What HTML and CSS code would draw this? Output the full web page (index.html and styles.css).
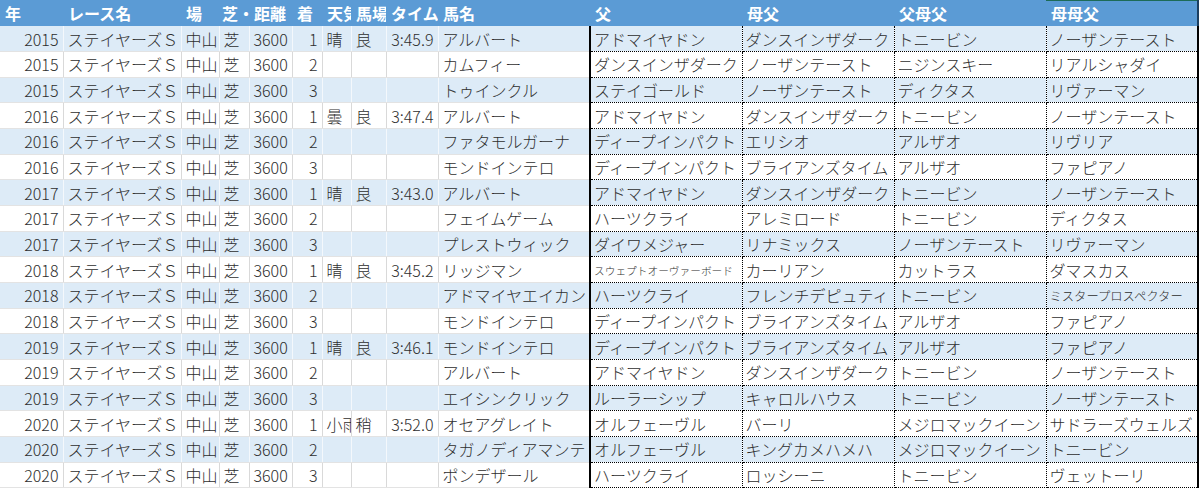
FILE: index.html
```html
<!DOCTYPE html>
<html lang="ja">
<head>
<meta charset="utf-8">
<title>ステイヤーズS</title>
<link rel="stylesheet" href="styles.css">
</head>
<body>
<table class="sheet">
  <colgroup>
    <col class="c-year"><col class="c-race"><col class="c-place"><col class="c-turf"><col class="c-dist"><col class="c-rank"><col class="c-weather"><col class="c-track"><col class="c-time"><col class="c-horse"><col class="c-ped"><col class="c-ped"><col class="c-ped"><col class="c-ped-last">
  </colgroup>
  <thead>
    <tr>
      <th>年</th><th>レース名</th><th>場</th><th class="span">芝・距離</th><th></th><th>着</th><th>天気</th><th>馬場</th><th>タイム</th><th>馬名</th><th>父</th><th>母父</th><th>父母父</th><th class="last">母母父</th>
    </tr>
  </thead>
  <tbody>
    <tr class="band"><td class="r">2015</td><td>ステイヤーズＳ</td><td>中山</td><td>芝</td><td class="r">3600</td><td class="r">1</td><td>晴</td><td>良</td><td class="r">3:45.9</td><td>アルバート</td><td class="p first">アドマイヤドン</td><td class="p">ダンスインザダーク</td><td class="p">トニービン</td><td class="p end">ノーザンテースト</td></tr>
    <tr><td class="r">2015</td><td>ステイヤーズＳ</td><td>中山</td><td>芝</td><td class="r">3600</td><td class="r">2</td><td></td><td></td><td></td><td>カムフィー</td><td class="p first">ダンスインザダーク</td><td class="p">ノーザンテースト</td><td class="p">ニジンスキー</td><td class="p end">リアルシャダイ</td></tr>
    <tr class="band"><td class="r">2015</td><td>ステイヤーズＳ</td><td>中山</td><td>芝</td><td class="r">3600</td><td class="r">3</td><td></td><td></td><td></td><td>トゥインクル</td><td class="p first">ステイゴールド</td><td class="p">ノーザンテースト</td><td class="p">ディクタス</td><td class="p end">リヴァーマン</td></tr>
    <tr><td class="r">2016</td><td>ステイヤーズＳ</td><td>中山</td><td>芝</td><td class="r">3600</td><td class="r">1</td><td>曇</td><td>良</td><td class="r">3:47.4</td><td>アルバート</td><td class="p first">アドマイヤドン</td><td class="p">ダンスインザダーク</td><td class="p">トニービン</td><td class="p end">ノーザンテースト</td></tr>
    <tr class="band"><td class="r">2016</td><td>ステイヤーズＳ</td><td>中山</td><td>芝</td><td class="r">3600</td><td class="r">2</td><td></td><td></td><td></td><td>ファタモルガーナ</td><td class="p first">ディープインパクト</td><td class="p">エリシオ</td><td class="p">アルザオ</td><td class="p end">リヴリア</td></tr>
    <tr><td class="r">2016</td><td>ステイヤーズＳ</td><td>中山</td><td>芝</td><td class="r">3600</td><td class="r">3</td><td></td><td></td><td></td><td>モンドインテロ</td><td class="p first">ディープインパクト</td><td class="p">ブライアンズタイム</td><td class="p">アルザオ</td><td class="p end">ファピアノ</td></tr>
    <tr class="band"><td class="r">2017</td><td>ステイヤーズＳ</td><td>中山</td><td>芝</td><td class="r">3600</td><td class="r">1</td><td>晴</td><td>良</td><td class="r">3:43.0</td><td>アルバート</td><td class="p first">アドマイヤドン</td><td class="p">ダンスインザダーク</td><td class="p">トニービン</td><td class="p end">ノーザンテースト</td></tr>
    <tr><td class="r">2017</td><td>ステイヤーズＳ</td><td>中山</td><td>芝</td><td class="r">3600</td><td class="r">2</td><td></td><td></td><td></td><td>フェイムゲーム</td><td class="p first">ハーツクライ</td><td class="p">アレミロード</td><td class="p">トニービン</td><td class="p end">ディクタス</td></tr>
    <tr class="band"><td class="r">2017</td><td>ステイヤーズＳ</td><td>中山</td><td>芝</td><td class="r">3600</td><td class="r">3</td><td></td><td></td><td></td><td>プレストウィック</td><td class="p first">ダイワメジャー</td><td class="p">リナミックス</td><td class="p">ノーザンテースト</td><td class="p end">リヴァーマン</td></tr>
    <tr><td class="r">2018</td><td>ステイヤーズＳ</td><td>中山</td><td>芝</td><td class="r">3600</td><td class="r">1</td><td>晴</td><td>良</td><td class="r">3:45.2</td><td>リッジマン</td><td class="p first"><span class="shrink-xs">スウェプトオーヴァーボード</span></td><td class="p">カーリアン</td><td class="p">カットラス</td><td class="p end">ダマスカス</td></tr>
    <tr class="band"><td class="r">2018</td><td>ステイヤーズＳ</td><td>中山</td><td>芝</td><td class="r">3600</td><td class="r">2</td><td></td><td></td><td></td><td>アドマイヤエイカン</td><td class="p first">ハーツクライ</td><td class="p">フレンチデピュティ</td><td class="p">トニービン</td><td class="p end"><span class="shrink-s">ミスタープロスペクター</span></td></tr>
    <tr><td class="r">2018</td><td>ステイヤーズＳ</td><td>中山</td><td>芝</td><td class="r">3600</td><td class="r">3</td><td></td><td></td><td></td><td>モンドインテロ</td><td class="p first">ディープインパクト</td><td class="p">ブライアンズタイム</td><td class="p">アルザオ</td><td class="p end">ファピアノ</td></tr>
    <tr class="band"><td class="r">2019</td><td>ステイヤーズＳ</td><td>中山</td><td>芝</td><td class="r">3600</td><td class="r">1</td><td>晴</td><td>良</td><td class="r">3:46.1</td><td>モンドインテロ</td><td class="p first">ディープインパクト</td><td class="p">ブライアンズタイム</td><td class="p">アルザオ</td><td class="p end">ファピアノ</td></tr>
    <tr><td class="r">2019</td><td>ステイヤーズＳ</td><td>中山</td><td>芝</td><td class="r">3600</td><td class="r">2</td><td></td><td></td><td></td><td>アルバート</td><td class="p first">アドマイヤドン</td><td class="p">ダンスインザダーク</td><td class="p">トニービン</td><td class="p end">ノーザンテースト</td></tr>
    <tr class="band"><td class="r">2019</td><td>ステイヤーズＳ</td><td>中山</td><td>芝</td><td class="r">3600</td><td class="r">3</td><td></td><td></td><td></td><td>エイシンクリック</td><td class="p first">ルーラーシップ</td><td class="p">キャロルハウス</td><td class="p">トニービン</td><td class="p end">ノーザンテースト</td></tr>
    <tr><td class="r">2020</td><td>ステイヤーズＳ</td><td>中山</td><td>芝</td><td class="r">3600</td><td class="r">1</td><td>小雨</td><td>稍</td><td class="r">3:52.0</td><td>オセアグレイト</td><td class="p first">オルフェーヴル</td><td class="p">バーリ</td><td class="p">メジロマックイーン</td><td class="p end">サドラーズウェルズ</td></tr>
    <tr class="band"><td class="r">2020</td><td>ステイヤーズＳ</td><td>中山</td><td>芝</td><td class="r">3600</td><td class="r">2</td><td></td><td></td><td></td><td>タガノディアマンテ</td><td class="p first">オルフェーヴル</td><td class="p">キングカメハメハ</td><td class="p">メジロマックイーン</td><td class="p end">トニービン</td></tr>
    <tr><td class="r">2020</td><td>ステイヤーズＳ</td><td>中山</td><td>芝</td><td class="r">3600</td><td class="r">3</td><td></td><td></td><td></td><td>ポンデザール</td><td class="p first">ハーツクライ</td><td class="p">ロッシーニ</td><td class="p">トニービン</td><td class="p end">ヴェットーリ</td></tr>
  </tbody>
</table>
</body>
</html>
```

FILE: styles.css
```css
html, body {
  margin: 0;
  padding: 0;
  background: #ffffff;
}

.sheet {
  border-collapse: collapse;
  table-layout: fixed;
  width: 1198px;
  font-family: "Noto Sans CJK JP", "Noto Sans", sans-serif;
  font-size: 16px;
  font-weight: 300;
  color: #2e2e2e;
}

.c-year { width: 63px; }
.c-race { width: 118px; }
.c-place { width: 38px; }
.c-turf { width: 30px; }
.c-dist { width: 43px; }
.c-rank { width: 30px; }
.c-weather { width: 29px; }
.c-track { width: 35px; }
.c-time { width: 52px; }
.c-horse { width: 152px; }
.c-ped { width: 152px; }
.c-ped-last { width: 152px; }

.sheet th,
.sheet td {
  padding: 0 4px;
  white-space: nowrap;
  overflow: hidden;
  text-align: left;
  vertical-align: middle;
  line-height: 20px;
}

.sheet thead tr {
  height: 26px;
}

.sheet th {
  background: #5b9bd5;
  color: #ffffff;
  font-weight: bold;
  padding: 0 5px;
}

.sheet th.span {
  overflow: visible;
  padding-left: 3px;
}

.sheet th.last {
  box-shadow: inset 0 1px 0 #1d6b57;
  border-right: 2px solid #1c3f60;
}

.sheet tbody tr {
  height: 25.67px;
}

.sheet td {
  border-right: 1px solid #d9d9d9;
  border-bottom: 1px solid #e3e3e3;
}

.sheet tbody tr.band td {
  background: #ddebf7;
  border-right-color: #f4f8fc;
}

.sheet td.r {
  text-align: right;
}

.sheet td.p {
  border-right: 1px dotted #000000;
  border-bottom: 1px dotted #000000;
  padding-left: 3px;
}

.sheet tbody tr.band td.p {
  border-right-color: #000000;
}

.sheet td.first {
  border-left: 2px solid #000000;
}

.sheet td.end {
  border-right: 2px solid #000000;
}

.sheet tbody tr.band td.end {
  border-right-color: #000000;
}

.shrink-xs {
  font-size: 10.7px;
}

.shrink-s {
  font-size: 12.3px;
}
```
